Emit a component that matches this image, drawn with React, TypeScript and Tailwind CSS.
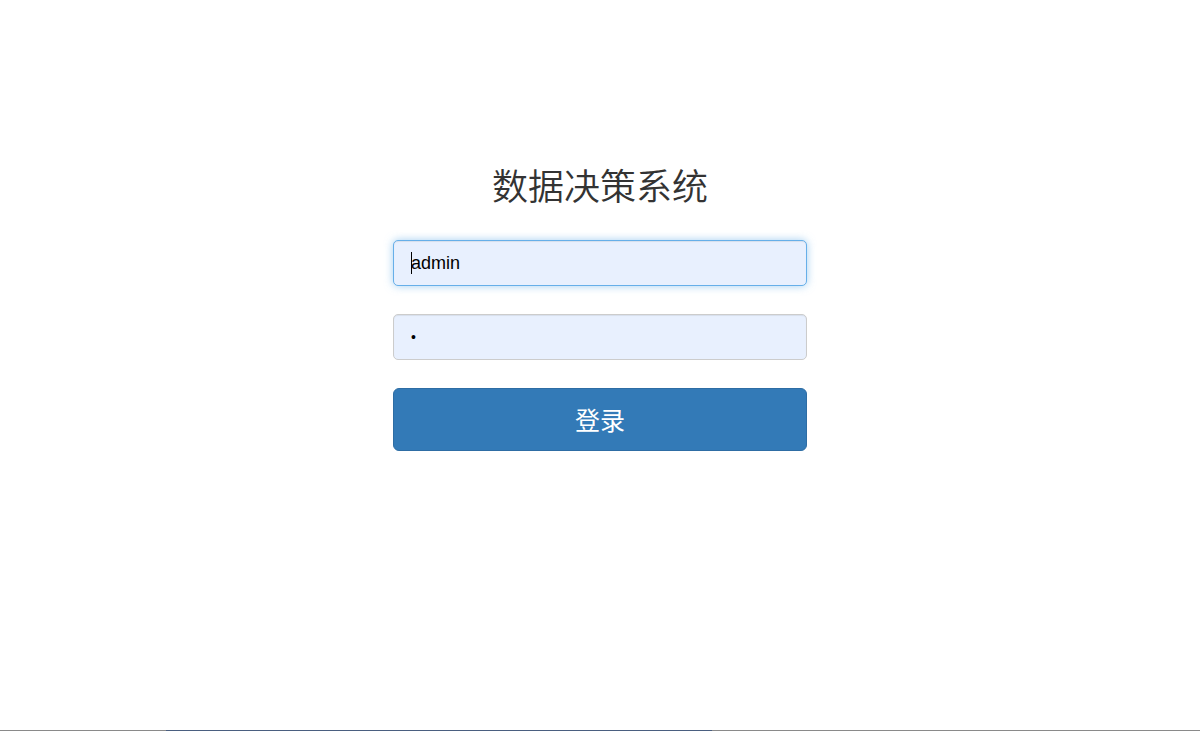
import React from "react";

export default function App() {
  return (
    <div className="flex h-[731px] w-full flex-col bg-white" style={{ fontFamily: '"Liberation Sans", "Noto Sans CJK SC", sans-serif' }}>
      <div className="flex flex-1 flex-col items-center pt-[164px]">
        <h1 className="h-[40px] text-[36px] leading-[40px] font-normal text-[#333333]" style={{ fontFamily: '"Noto Sans CJK SC", sans-serif', fontWeight: 350 }}>
          数据决策系统
        </h1>
        <form className="mt-[36px] flex w-[414px] flex-col gap-[28px]" onSubmit={(e) => e.preventDefault()}>
          <div className="relative">
            <input
              type="text"
              readOnly
              defaultValue="admin"
              className="h-[46px] w-full rounded-[5px] border border-[#66afe9] bg-[#e8f0fe] px-[17px] text-[18px] text-black outline-none shadow-[inset_0_1px_1px_rgba(0,0,0,0.075),0_0_8px_rgba(102,175,233,0.6)]"
              style={{ fontFamily: '"Liberation Sans", Arial, sans-serif' }}
            />
            <span className="pointer-events-none absolute left-[18px] top-[12px] h-[22px] w-px bg-black" />
          </div>
          <input
            type="password"
            readOnly
            defaultValue="a"
            className="h-[46px] w-full rounded-[5px] border border-[#cccccc] bg-[#e8f0fe] px-[17px] text-[14px] text-black outline-none shadow-[inset_0_1px_1px_rgba(0,0,0,0.075)]"
            style={{ fontFamily: '"Liberation Sans", Arial, sans-serif' }}
          />
          <button
            type="submit"
            className="h-[63px] w-full rounded-[6px] border border-[#2e6da4] bg-[#337ab7] text-[25px] text-white"
            style={{ fontFamily: '"Noto Sans CJK SC", sans-serif' }}
          >
            登录
          </button>
        </form>
      </div>
      <div className="flex h-px w-full">
        <div className="w-[166px] bg-[#8a8a8a]" />
        <div className="w-[546px] bg-[#4a5f80]" />
        <div className="flex-1 bg-[#8a8a8a]" />
      </div>
    </div>
  );
}
